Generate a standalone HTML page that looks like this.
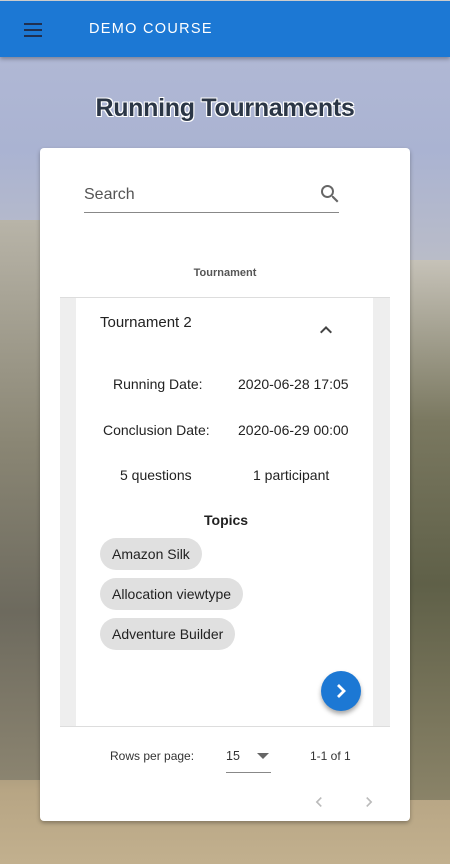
<!DOCTYPE html>
<html><head><meta charset="utf-8"><style>
*{box-sizing:border-box;margin:0;padding:0}
body{width:450px;height:864px;overflow:hidden;font-family:"Liberation Sans",Roboto,sans-serif;position:relative;
background:linear-gradient(180deg,#b4bbd6 0px,#aab3d2 150px,#b9bcc8 260px,#a6a296 400px,#8f8a7c 560px,#7d7866 700px,#b7a584 790px,#c2b08e 864px);}
.lft{position:absolute;left:0;top:220px;width:40px;height:560px;background:linear-gradient(180deg,#b8b4a8,#8a8674 40%,#6d6a5e 70%,#8b8470);}
.rgt{position:absolute;left:410px;top:260px;width:40px;height:540px;background:linear-gradient(180deg,#c6c2b8,#7a7860 30%,#5f6048 60%,#8a8368);}
.bar{position:absolute;left:0;top:0;width:450px;height:57px;background:#1c78d4;box-shadow:0 2px 4px rgba(0,0,0,.3);border-top:1px solid #ccc}
.bar .t{position:absolute;left:89px;top:20px;color:#fff;font-size:14.5px;letter-spacing:1.3px;font-weight:500}
.ham{position:absolute;left:24px;top:22px;width:18px}
.ham i{display:block;height:2px;background:#203050;margin-bottom:4px}
h1{position:absolute;top:94px;width:450px;text-align:center;font-size:25px;font-weight:bold;color:#2b3646;letter-spacing:-0.3px;
text-shadow:1px 1px 0 #fff,-1px -1px 0 #fff,1px -1px 0 #fff,-1px 1px 0 #fff}
.card{position:absolute;left:40px;top:148px;width:370px;height:673px;background:#fff;border-radius:4px;box-shadow:0 2px 4px rgba(0,0,0,.3)}
.search{position:absolute;left:44px;top:36px;width:255px;height:29px;border-bottom:1px solid #888;font-size:16px;color:#555}
.th{position:absolute;top:119px;width:370px;text-align:center;font-size:11px;font-weight:bold;color:#555}
.grey{position:absolute;left:20px;top:149px;width:330px;height:430px;background:#eee;border-top:1px solid #ddd;border-bottom:1px solid #ddd}
.in{position:absolute;left:16px;top:0;width:297px;height:428px;background:#fff;font-size:14px;color:#222}
.a{position:absolute}
.chip{position:absolute;left:24px;height:32px;border-radius:16px;background:#e0e0e0;padding:0 12px;line-height:32px;font-size:14px;color:#222}
.fab{position:absolute;left:245px;top:373px;width:40px;height:40px;border-radius:50%;background:#1c78d4;box-shadow:0 3px 5px rgba(0,0,0,.35)}
.pg{position:absolute;top:601px;font-size:12px;color:#333}
</style></head><body>
<div class="lft"></div><div class="rgt"></div>
<div class="bar"><div class="ham"><i></i><i></i><i></i></div><div class="t">DEMO COURSE</div></div>
<h1>Running Tournaments</h1>
<div class="card">
<div class="search"><span style="position:absolute;top:2px">Search</span>
<svg style="position:absolute;right:-3px;top:-2px" width="24" height="24" viewBox="0 0 24 24"><path fill="#666" d="M15.5 14h-.79l-.28-.27A6.47 6.47 0 0016 9.5 6.5 6.5 0 109.5 16c1.61 0 3.09-.59 4.23-1.57l.27.28v.79l5 4.99L20.49 19l-4.99-5zm-6 0C7.01 14 5 11.99 5 9.5S7.01 5 9.5 5 14 7.01 14 9.5 11.99 14 9.5 14z"/></svg></div>
<div class="th">Tournament</div>
<div class="grey"><div class="in">
<div class="a" style="left:24px;top:16px;font-size:15px">Tournament 2</div>
<svg class="a" style="left:238px;top:20px" width="24" height="24" viewBox="0 0 24 24"><path fill="#444" d="M7.41 15.41L12 10.83l4.59 4.58L18 14l-6-6-6 6z"/></svg>
<div class="a" style="left:37px;top:78px">Running Date:</div>
<div class="a" style="left:162px;top:78px">2020-06-28 17:05</div>
<div class="a" style="left:27px;top:124px">Conclusion Date:</div>
<div class="a" style="left:162px;top:124px">2020-06-29 00:00</div>
<div class="a" style="left:44px;top:169px">5 questions</div>
<div class="a" style="left:177px;top:169px">1 participant</div>
<div class="a" style="left:128px;top:214px;font-weight:bold">Topics</div>
<div class="chip" style="top:240px">Amazon Silk</div>
<div class="chip" style="top:280px">Allocation viewtype</div>
<div class="chip" style="top:320px">Adventure Builder</div>
<div class="fab"><svg style="position:absolute;left:8px;top:8px" width="24" height="24" viewBox="0 0 24 24"><path fill="none" stroke="#fff" stroke-width="2.8" d="M9 6l6 6-6 6"/></svg></div>
</div></div>
<div class="pg" style="left:70px">Rows per page:</div>
<div class="pg" style="left:186px;font-size:12.5px">15</div>
<svg style="position:absolute;left:216px;top:603px" width="14" height="10"><path d="M1 2h12L7 8z" fill="#666"/></svg>
<div style="position:absolute;left:186px;top:624px;width:45px;border-bottom:1px solid #888"></div>
<div class="pg" style="left:270px">1-1 of 1</div>
<svg style="position:absolute;left:269px;top:644px" width="20" height="20" viewBox="0 0 24 24"><path fill="#bbb" d="M15.41 7.41L14 6l-6 6 6 6 1.41-1.41L10.83 12z"/></svg>
<svg style="position:absolute;left:319px;top:644px" width="20" height="20" viewBox="0 0 24 24"><path fill="#bbb" d="M10 6L8.59 7.41 13.17 12l-4.58 4.59L10 18l6-6z"/></svg>
</div>
</body></html>
